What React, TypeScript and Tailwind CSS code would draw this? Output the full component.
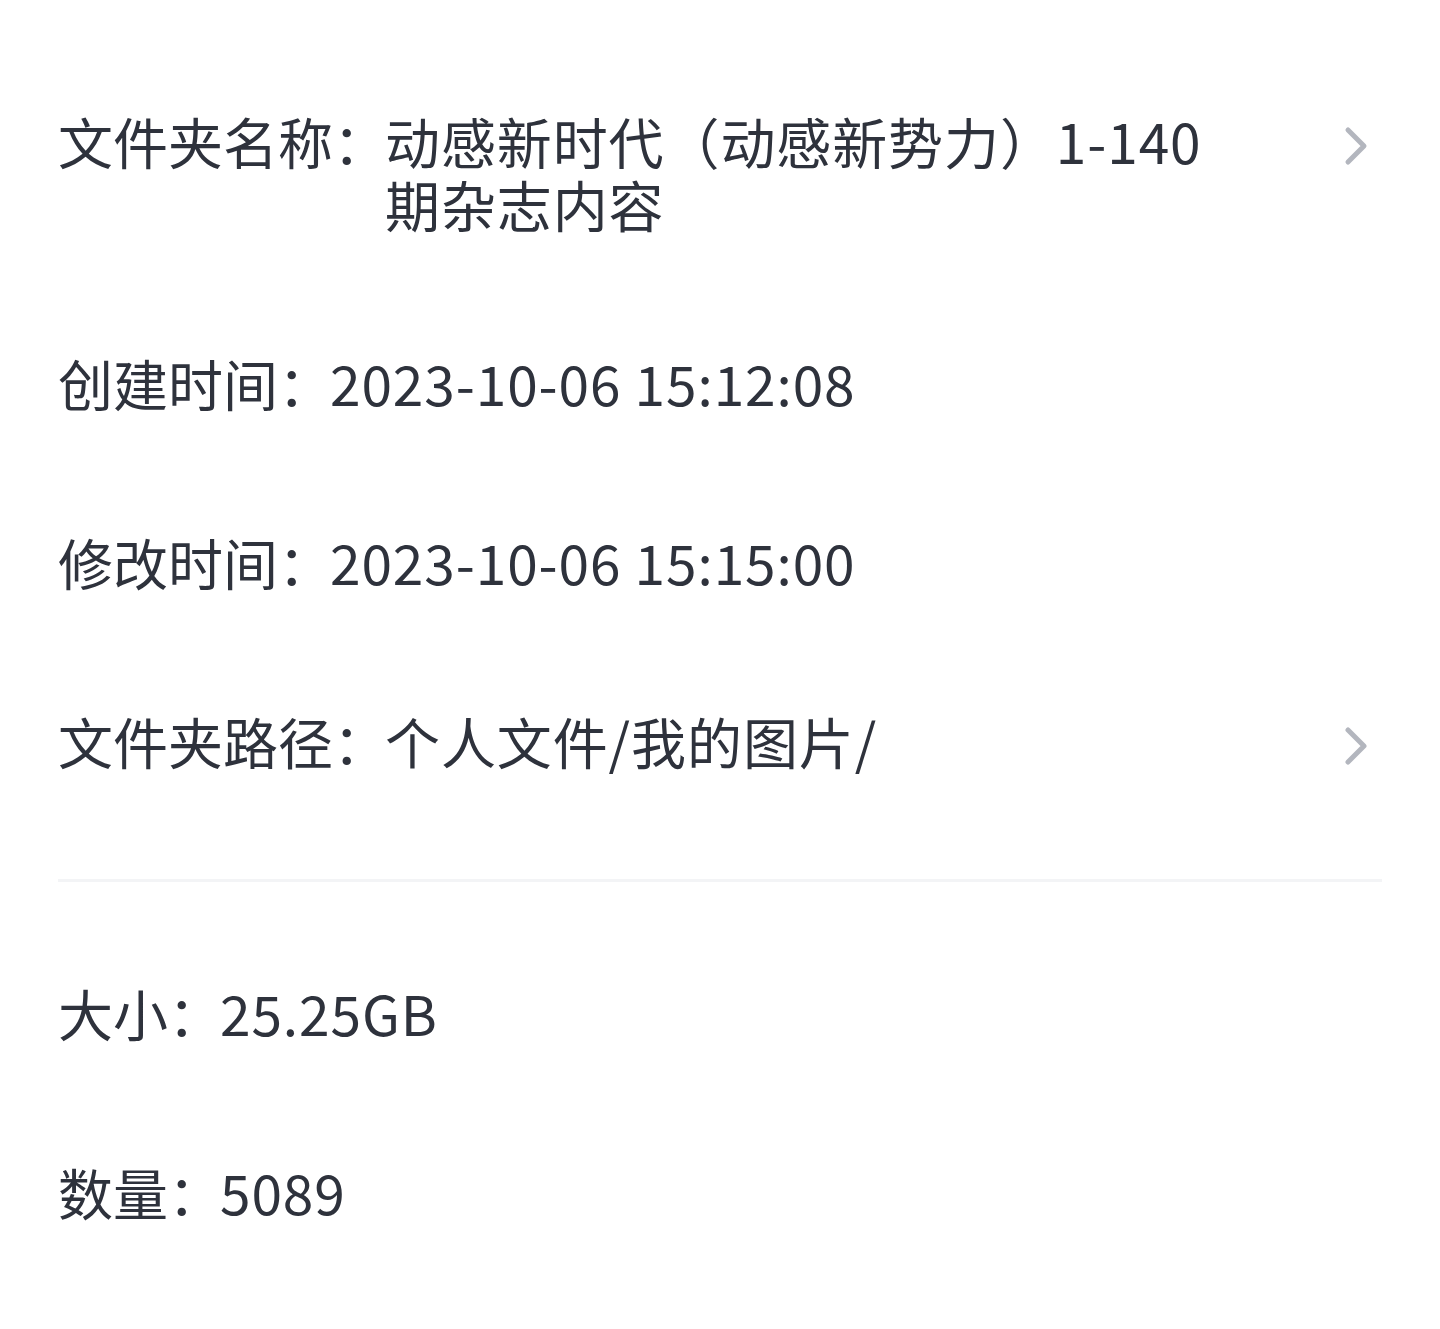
import { ReactNode } from 'react'

interface InfoRowProps {
  label: string
  value: ReactNode
  arrow?: boolean
}

function Chevron() {
  return (
    <svg width="24" height="40" viewBox="0 0 24 40" fill="none" className="text-[#b3b6be]">
      <path d="M4 4L20 20L4 36" stroke="currentColor" strokeWidth="5" strokeLinecap="round" strokeLinejoin="round" />
    </svg>
  )
}

function InfoRow({ label, value, arrow = false }: InfoRowProps) {
  return (
    <div className="flex items-start py-[58px]">
      <span className="shrink-0 whitespace-nowrap">{label}</span>
      <span className="flex-1 max-w-[850px] -ml-[3px] tracking-[0.9px]">{value}</span>
      {arrow && (
        <div className="ml-auto h-[63px] flex items-center pt-[10px] pr-[14px]">
          <Chevron />
        </div>
      )}
    </div>
  )
}

export default function App() {
  return (
    <div
      className="min-h-[1329px] bg-white px-[58px] pt-[51px] text-[55px] leading-[63px] text-[#2e323c]"
      style={{ fontFamily: '"Noto Sans CJK SC", "Noto Sans", sans-serif' }}
    >
      <InfoRow label="文件夹名称：" value="动感新时代（动感新势力）1-140期杂志内容" arrow />
      <InfoRow label="创建时间：" value="2023-10-06 15:12:08" />
      <InfoRow label="修改时间：" value="2023-10-06 15:15:00" />
      <InfoRow label="文件夹路径：" value="个人文件/我的图片/" arrow />

      {/* divider */}
      <div className="mt-[49px] mb-[41px] h-[3px] bg-[#f3f4f6]" />

      <InfoRow label="大小：" value="25.25GB" />
      <InfoRow label="数量：" value="5089" />
    </div>
  )
}
